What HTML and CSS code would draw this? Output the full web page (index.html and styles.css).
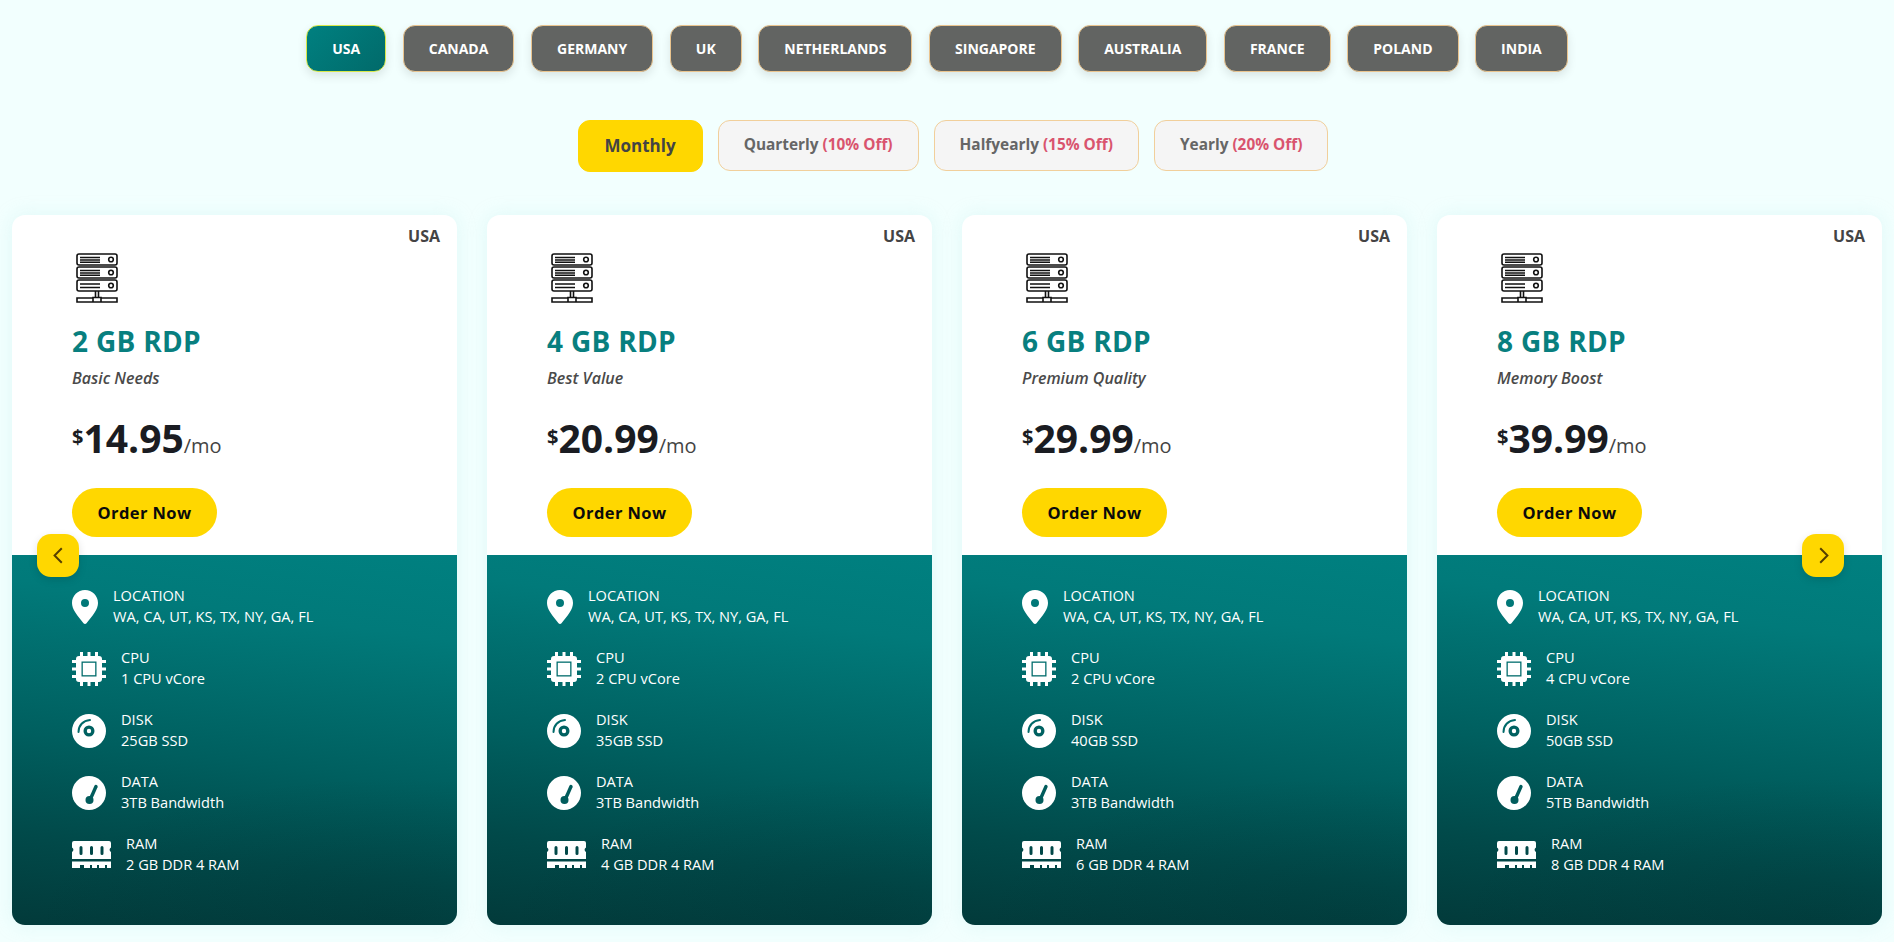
FILE: index.html
```html
<!DOCTYPE html>
<html lang="en">
<head>
<meta charset="utf-8">
<title>RDP Plans</title>
<link rel="stylesheet" href="styles.css">
</head>
<body>
<svg class="defs" width="0" height="0" aria-hidden="true">
  <symbol id="i-server" viewBox="0 0 42 50">
    <g fill="none" stroke="#111" stroke-width="1.600">
      <rect x="1" y="1" width="40" height="11" rx="2"/>
      <rect x="1" y="14" width="40" height="11" rx="2"/>
      <rect x="1" y="27" width="40" height="11" rx="2"/>
      <circle cx="35" cy="6.500" r="2.300"/><circle cx="35" cy="19.500" r="2.300"/><circle cx="35" cy="32.500" r="2.300"/>
      <path d="M4 4.500h20M4 7h20M4 9.200h20M4 17.500h20M4 20h20M4 22.200h20M4 31h20M4 34.500h20"/>
      <path d="M19.500 38v6M22.500 38v6M17 49v-4.500h8v4.500zM1 45h16v4H1zM25 45h16v4H25z"/>
    </g>
  </symbol>
  <symbol id="i-pin" viewBox="0 0 26 34">
    <path fill="#fff" fill-rule="evenodd" d="M13 0C5.800 0 0 5.800 0 13c0 3.200 1.300 6.200 3.200 9.200 2.400 3.900 5.900 7.900 8.300 11 .8 1 2.200 1 3 0 2.400-3.100 5.900-7.100 8.300-11C24.700 19.200 26 16.200 26 13 26 5.800 20.200 0 13 0zm0 9a4 4 0 1 1 0 8 4 4 0 0 1 0-8z"/>
  </symbol>
  <symbol id="i-cpu" viewBox="0 0 34 34">
    <path fill="#fff" d="M8 0h3v5H8zM15.500 0h3v5h-3zM23 0h3v5h-3zM8 29h3v5H8zM15.500 29h3v5h-3zM23 29h3v5h-3zM0 8h5v3H0zM0 15.500h5v3H0zM0 23h5v3H0zM29 8h5v3h-5zM29 15.500h5v3h-5zM29 23h5v3h-5z"/>
    <path fill="#fff" fill-rule="evenodd" d="M7 4h20a3 3 0 0 1 3 3v20a3 3 0 0 1-3 3H7a3 3 0 0 1-3-3V7a3 3 0 0 1 3-3zm2.500 5.500v15h15v-15z"/>
    <rect fill="#fff" x="10.800" y="10.800" width="12.400" height="12.400"/>
  </symbol>
  <symbol id="i-disk" viewBox="0 0 34 34">
    <path fill="#fff" fill-rule="evenodd" d="M17 0a17 17 0 1 1 0 34 17 17 0 0 1 0-34zm0 11.500a5.500 5.500 0 1 0 0 11 5.500 5.500 0 0 0 0-11zm0 3.300a2.200 2.200 0 1 1 0 4.400 2.200 2.200 0 0 1 0-4.400z"/>
    <path fill="none" stroke="#016a6a" stroke-width="2" stroke-linecap="round" d="M6.500 18C6.500 11.500 11 6.500 18 6"/>
  </symbol>
  <symbol id="i-data" viewBox="0 0 34 34">
    <circle fill="#fff" cx="17" cy="17" r="17"/>
    <path fill="none" stroke="#015c5c" stroke-width="3.400" stroke-linecap="round" d="M24 10.500 18 24"/>
    <circle fill="#015c5c" cx="17.500" cy="24" r="4"/>
  </symbol>
  <symbol id="i-ram" viewBox="0 0 39 27">
    <path fill="#fff" fill-rule="evenodd" d="M2 0h35a2 2 0 0 1 2 2v4.500a2.500 2.500 0 0 0 0 4.500v7H0v-7a2.500 2.500 0 0 0 0-4.500V2a2 2 0 0 1 2-2zm7 5a1.500 1.500 0 0 0-1.500 1.500v6a1.500 1.500 0 0 0 3 0v-6A1.500 1.500 0 0 0 9 5zm10.500 0a1.500 1.500 0 0 0-1.500 1.500v6a1.500 1.500 0 0 0 3 0v-6a1.500 1.500 0 0 0-1.500-1.500zm10.500 0a1.500 1.500 0 0 0-1.500 1.500v6a1.500 1.500 0 0 0 3 0v-6A1.500 1.500 0 0 0 30 5z"/>
    <path fill="#fff" d="M0 20.500h39V27h-4v-3h-2v3h-6v-3h-2v3h-5v-3h-2v3h-6v-3H8v3H0z"/>
  </symbol>
</svg>

<nav class="countries">
  <button class="country active">USA</button>
  <button class="country">Canada</button>
  <button class="country">Germany</button>
  <button class="country">UK</button>
  <button class="country">Netherlands</button>
  <button class="country">Singapore</button>
  <button class="country">Australia</button>
  <button class="country">France</button>
  <button class="country">Poland</button>
  <button class="country">India</button>
</nav>

<div class="billing">
  <button class="period selected">Monthly</button>
  <button class="period">Quarterly <span class="off">(10% Off)</span></button>
  <button class="period">Halfyearly <span class="off">(15% Off)</span></button>
  <button class="period">Yearly <span class="off">(20% Off)</span></button>
</div>

<main class="carousel">
  <button class="arrow arrow-prev" aria-label="Previous"><svg viewBox="0 0 16 16"><path d="M10.500 2.500 5 8l5.500 5.500"/></svg></button>
  <button class="arrow arrow-next" aria-label="Next"><svg viewBox="0 0 16 16"><path d="M5.500 2.500 11 8l-5.500 5.500"/></svg></button>

  <article class="card">
    <span class="region">USA</span>
    <div class="top">
      <svg class="server"><use href="#i-server"/></svg>
      <h2 class="plan">2 GB RDP</h2>
      <p class="tagline">Basic Needs</p>
      <p class="price"><sup>$</sup><strong>14.95</strong><span>/mo</span></p>
      <a class="order">Order Now</a>
    </div>
    <ul class="specs">
      <li><svg class="ic-pin"><use href="#i-pin"/></svg><div>LOCATION<br>WA, CA, UT, KS, TX, NY, GA, FL</div></li>
      <li><svg class="ic"><use href="#i-cpu"/></svg><div>CPU<br>1 CPU vCore</div></li>
      <li><svg class="ic"><use href="#i-disk"/></svg><div>DISK<br>25GB SSD</div></li>
      <li><svg class="ic"><use href="#i-data"/></svg><div>DATA<br>3TB Bandwidth</div></li>
      <li><svg class="ic-ram"><use href="#i-ram"/></svg><div>RAM<br>2 GB DDR 4 RAM</div></li>
    </ul>
  </article>

  <article class="card">
    <span class="region">USA</span>
    <div class="top">
      <svg class="server"><use href="#i-server"/></svg>
      <h2 class="plan">4 GB RDP</h2>
      <p class="tagline">Best Value</p>
      <p class="price"><sup>$</sup><strong>20.99</strong><span>/mo</span></p>
      <a class="order">Order Now</a>
    </div>
    <ul class="specs">
      <li><svg class="ic-pin"><use href="#i-pin"/></svg><div>LOCATION<br>WA, CA, UT, KS, TX, NY, GA, FL</div></li>
      <li><svg class="ic"><use href="#i-cpu"/></svg><div>CPU<br>2 CPU vCore</div></li>
      <li><svg class="ic"><use href="#i-disk"/></svg><div>DISK<br>35GB SSD</div></li>
      <li><svg class="ic"><use href="#i-data"/></svg><div>DATA<br>3TB Bandwidth</div></li>
      <li><svg class="ic-ram"><use href="#i-ram"/></svg><div>RAM<br>4 GB DDR 4 RAM</div></li>
    </ul>
  </article>

  <article class="card">
    <span class="region">USA</span>
    <div class="top">
      <svg class="server"><use href="#i-server"/></svg>
      <h2 class="plan">6 GB RDP</h2>
      <p class="tagline">Premium Quality</p>
      <p class="price"><sup>$</sup><strong>29.99</strong><span>/mo</span></p>
      <a class="order">Order Now</a>
    </div>
    <ul class="specs">
      <li><svg class="ic-pin"><use href="#i-pin"/></svg><div>LOCATION<br>WA, CA, UT, KS, TX, NY, GA, FL</div></li>
      <li><svg class="ic"><use href="#i-cpu"/></svg><div>CPU<br>2 CPU vCore</div></li>
      <li><svg class="ic"><use href="#i-disk"/></svg><div>DISK<br>40GB SSD</div></li>
      <li><svg class="ic"><use href="#i-data"/></svg><div>DATA<br>3TB Bandwidth</div></li>
      <li><svg class="ic-ram"><use href="#i-ram"/></svg><div>RAM<br>6 GB DDR 4 RAM</div></li>
    </ul>
  </article>

  <article class="card">
    <span class="region">USA</span>
    <div class="top">
      <svg class="server"><use href="#i-server"/></svg>
      <h2 class="plan">8 GB RDP</h2>
      <p class="tagline">Memory Boost</p>
      <p class="price"><sup>$</sup><strong>39.99</strong><span>/mo</span></p>
      <a class="order">Order Now</a>
    </div>
    <ul class="specs">
      <li><svg class="ic-pin"><use href="#i-pin"/></svg><div>LOCATION<br>WA, CA, UT, KS, TX, NY, GA, FL</div></li>
      <li><svg class="ic"><use href="#i-cpu"/></svg><div>CPU<br>4 CPU vCore</div></li>
      <li><svg class="ic"><use href="#i-disk"/></svg><div>DISK<br>50GB SSD</div></li>
      <li><svg class="ic"><use href="#i-data"/></svg><div>DATA<br>5TB Bandwidth</div></li>
      <li><svg class="ic-ram"><use href="#i-ram"/></svg><div>RAM<br>8 GB DDR 4 RAM</div></li>
    </ul>
  </article>
</main>
</body>
</html>
```
FILE: styles.css
```css
* { box-sizing: border-box; }
html, body { margin: 0; height: 942px; overflow: hidden; }
body { background: #f2fffe; font-family: "Open Sans", "Liberation Sans", sans-serif; color: #444; }
.defs { position: absolute; }
button { font-family: inherit; cursor: pointer; }

.countries { display: flex; justify-content: center; gap: 16.600px; padding: 25px 20px 0 0; }
.country {
  height: 47px; padding: 0 25px; border: 1px solid #eac48e; border-radius: 12px;
  background: #626462; color: #fff; font-size: 14px; font-weight: 700; text-transform: uppercase;
  box-shadow: 0 4px 10px rgba(0, 0, 0, .1);
}
.country.active { background: linear-gradient(135deg, #008080, #016a6a); border-color: #d9e84a; }

.billing { display: flex; justify-content: center; align-items: flex-start; gap: 15px; padding: 48px 0 0 12px; }
.period {
  height: 51px; padding: 0 25px 3px; border: 1px solid #f1cf9b; border-radius: 12px;
  background: #f5f5f5; color: #666; font-size: 15.400px; font-weight: 700;
}
.period.selected { height: 52px; padding: 0 26px 1px; background: #ffd700; border-color: #ffd700; color: #444; font-size: 17px; }
.off { color: #d9546e; }

.carousel { position: relative; display: flex; gap: 30px; margin-top: 43px; padding: 0 12px; }
.arrow {
  position: absolute; top: 319px; width: 42px; height: 43px; padding: 0; border: 0; border-radius: 14px;
  background: #ffd700; display: flex; align-items: center; justify-content: center;
  box-shadow: 0 3px 8px rgba(0, 0, 0, .12); z-index: 2;
}
.arrow svg { width: 21px; height: 21px; fill: none; stroke: #553f00; stroke-width: 1.500; }
.arrow-prev { left: 37px; }
.arrow-next { right: 50px; }

.card {
  position: relative; flex: 0 0 445px; height: 710px; display: flex; flex-direction: column;
  border-radius: 13px; overflow: hidden; background: #fff; box-shadow: 0 0 18px rgba(190, 235, 235, .35);
}
.region { position: absolute; top: 10px; right: 17px; font-size: 16px; font-weight: 700; color: #444; }
.top { height: 340px; padding: 38px 0 0 60px; flex: none; }
.server { display: block; width: 42px; height: 50px; margin-left: 4px; }
.plan { margin: 19px 0 0; font-size: 28px; line-height: 38px; font-weight: 700; color: #087f7f; letter-spacing: .3px; }
.tagline { margin: 7px 0 0; font-size: 16px; line-height: 22px; font-style: italic; font-weight: 600; color: #4a4a4a; }
.price { margin: 23px 0 0; display: flex; align-items: baseline; line-height: 52px; height: 52px; color: #444; }
.price sup { font-size: 20px; font-weight: 700; color: #1a1c22; line-height: 1; position: relative; top: -9px; vertical-align: baseline; }
.price strong { font-size: 39px; font-weight: 700; color: #1a1c22; }
.price span { font-size: 20px; }
.order {
  display: flex; align-items: center; justify-content: center; width: 145px; height: 49px; margin-top: 24px;
  border-radius: 25px; background: #ffd700; color: #0b0b0b; font-size: 16.500px; font-weight: 700; letter-spacing: .4px;
}

.specs {
  list-style: none; margin: 0; padding: 31px 0 0 60px; flex: 1; display: flex; flex-direction: column; gap: 21px;
  color: #fff; font-size: 14.600px; line-height: 20.500px;
  background:
    radial-gradient(ellipse 80% 40% at 85% 100%, rgba(0, 40, 40, .25), rgba(0, 40, 40, 0)),
    linear-gradient(188deg, #008080 0%, #017a7a 20%, #005f5f 55%, #014a4a 78%, #023a3a 100%);
}
.specs li { display: flex; align-items: center; gap: 15px; height: 41px; }
.specs div { padding-bottom: 2px; }
.ic { width: 34px; height: 34px; flex: none; }
.ic-pin { width: 26px; height: 34px; flex: none; }
.ic-ram { width: 39px; height: 27px; flex: none; }
```
